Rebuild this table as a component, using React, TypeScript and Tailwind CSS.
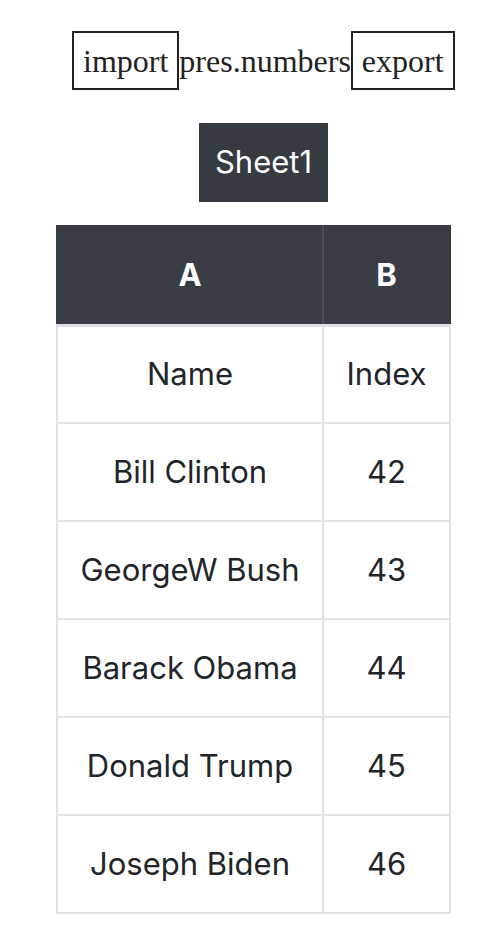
const rows: [string, string][] = [
	["Name", "Index"],
	["Bill Clinton", "42"],
	["GeorgeW Bush", "43"],
	["Barack Obama", "44"],
	["Donald Trump", "45"],
	["Joseph Biden", "46"],
];

export default function App() {
	return (
		<div className="min-h-[944px] bg-white text-[#212529]">
			{/* file controls */}
			<div className="flex items-center pt-[31px] pl-[72px] font-['Liberation_Serif',serif] text-[32px] text-[#222]">
				<button className="border-2 border-[#222] px-[9px] h-[59px] leading-none">import</button>
				<span>pres.numbers</span>
				<button className="border-2 border-[#222] px-[9px] h-[59px] leading-none">export</button>
			</div>

			{/* sheet tabs */}
			<div className="pl-[199px] mt-[33px] font-['Inter',sans-serif]">
				<button className="h-[79px] w-[129px] bg-[#363a41] text-white text-[31px] flex items-center justify-center">
					Sheet1
				</button>
			</div>

			{/* grid */}
			<div className="pl-[56px] mt-[23px] font-['Inter',sans-serif]">
				<table className="w-[395px] border-collapse text-center text-[31px]">
					<thead>
						<tr className="bg-[#383c44] text-white">
							<th className="w-[266px] h-[99px] font-bold border-2 border-[#383c44] border-r-[#4a4f57] border-b-[3px] border-b-[#dee2e6]">A</th>
							<th className="h-[99px] font-bold border-2 border-[#383c44] border-l-[#4a4f57] border-b-[3px] border-b-[#dee2e6]">B</th>
						</tr>
					</thead>
					<tbody>
						{rows.map(([name, idx]) => (
							<tr key={name}>
								<td className="h-[98px] border-2 border-[#dee2e6]">{name}</td>
								<td className="h-[98px] border-2 border-[#dee2e6]">{idx}</td>
							</tr>
						))}
					</tbody>
				</table>
			</div>
		</div>
	);
}
